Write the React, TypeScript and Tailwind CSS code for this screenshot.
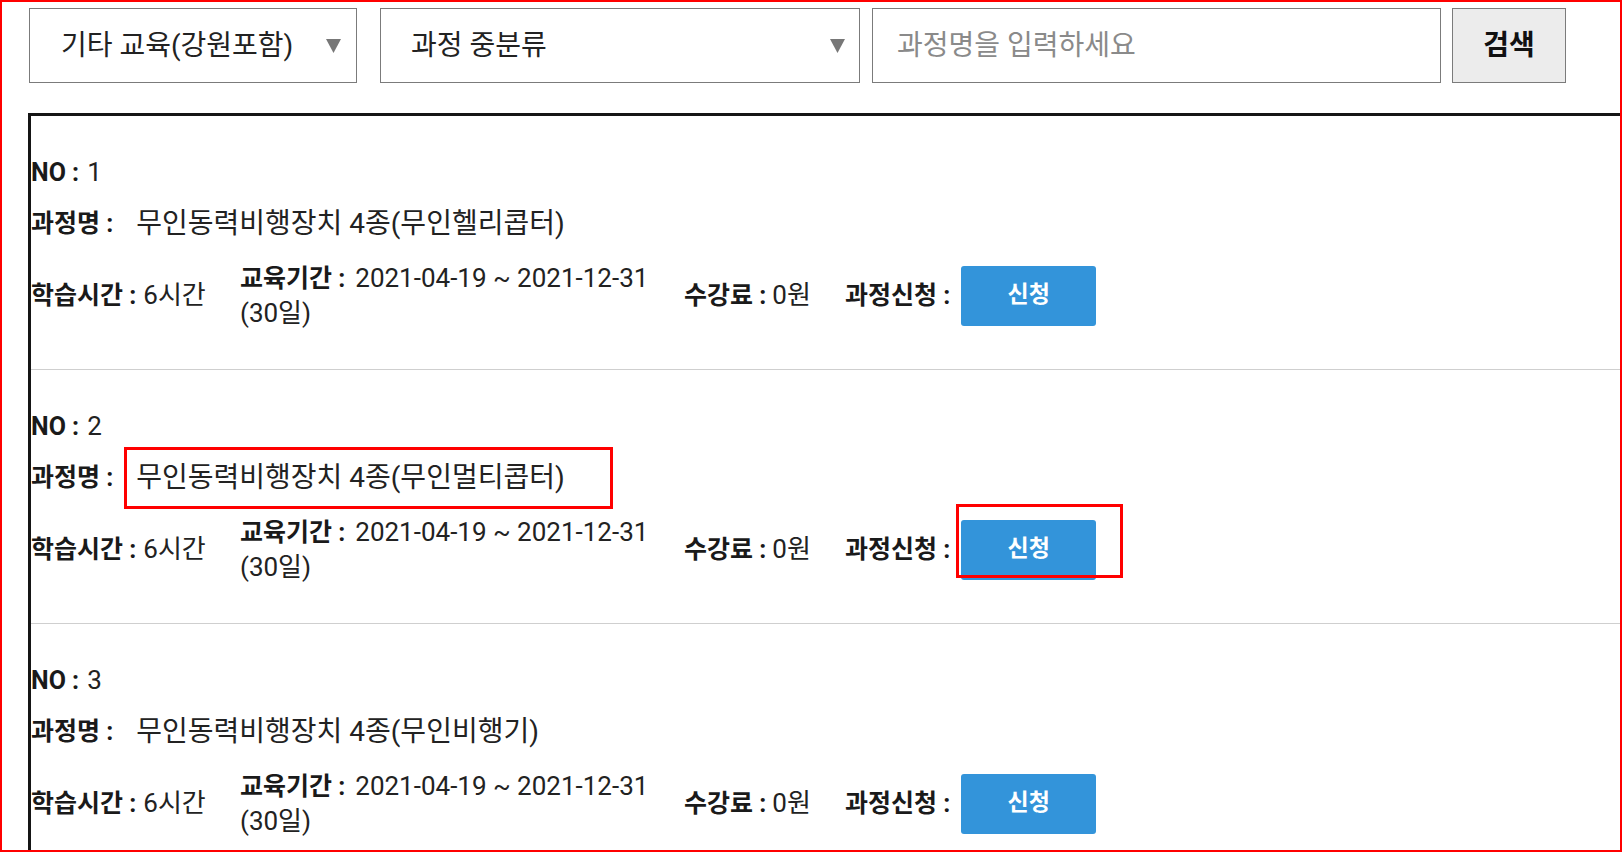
const rows = [
  { no: 1, name: '무인동력비행장치 4종(무인헬리콥터)', marked: false },
  { no: 2, name: '무인동력비행장치 4종(무인멀티콥터)', marked: true },
  { no: 3, name: '무인동력비행장치 4종(무인비행기)', marked: false },
];

function Caret() {
  return (
    <svg width="15" height="15" viewBox="0 0 15 15" className="shrink-0">
      <polygon points="0,1 15,1 7.5,15" fill="#777" />
    </svg>
  );
}

function Label({ children }: { children: React.ReactNode }) {
  return <span className="text-[25px] font-bold text-[#1a1a1a]">{children}</span>;
}

export default function App() {
  return (
    <div className="h-[852px] w-[1622px] overflow-hidden border-2 border-[#ff0000] bg-white pl-[26px] pt-[6px] font-['Roboto','Noto_Sans_CJK_KR',sans-serif] text-[#222]">
      <div className="flex h-[75px] items-stretch">
        <div className="ml-[1px] flex w-[328px] items-center justify-between border border-[#7b7b7b] pl-[31px] pr-[15px] text-[28px] text-[#222]">
          <span>기타 교육(강원포함)</span>
          <Caret />
        </div>
        <div className="ml-[23px] flex w-[480px] items-center justify-between border border-[#7b7b7b] pl-[30px] pr-[14px] text-[28px] text-[#222]">
          <span>과정 중분류</span>
          <Caret />
        </div>
        <div className="ml-[12px] flex w-[569px] items-center border border-[#7b7b7b] pl-[24px] text-[28px] text-[#8a8a8a]">
          과정명을 입력하세요
        </div>
        <div className="ml-[11px] flex w-[114px] items-center justify-center border border-[#7b7b7b] bg-[#ececec] text-[28px] font-bold text-[#111]">
          검색
        </div>
      </div>

      <div className="mt-[30px] border-l-[3px] border-t-[3px] border-[#151515]">
        {rows.map((r) => (
          <div key={r.no} className="relative border-b border-[#cfcfcf] pb-[39px] pt-[38px]">
            <div className="text-[26px] leading-[36px]">
              <Label>NO :</Label>
              <span className="ml-[8px]">{r.no}</span>
            </div>
            <div className="mt-[15px] flex items-center leading-[36px]">
              <Label>과정명 :</Label>
              <span className="ml-[23px] text-[28px]">{r.name}</span>
            </div>
            <div className="mt-[19px] flex items-center">
              <div className="w-[209px] text-[26px] leading-[36px]">
                <Label>학습시간 :</Label>
                <span className="ml-[7px]">6시간</span>
              </div>
              <div className="w-[444px] pr-[20px] text-[26px] leading-[34px]">
                <Label>교육기간 :</Label>
                <span className="ml-[10px]">2021-04-19 ~ 2021-12-31 (30일)</span>
              </div>
              <div className="w-[161px] text-[26px] leading-[36px]">
                <Label>수강료 :</Label>
                <span className="ml-[6px]">0원</span>
              </div>
              <div className="flex items-center">
                <Label>과정신청 :</Label>
                <div className="ml-[11px] flex h-[60px] w-[135px] items-center justify-center rounded-[3px] bg-[#3394da] text-[23px] font-bold text-white">
                  신청
                </div>
              </div>
            </div>
            {r.marked && (
              <>
                <div className="pointer-events-none absolute left-[93px] top-[77px] h-[62px] w-[489px] border-[3px] border-[#ff0000]" />
                <div className="pointer-events-none absolute left-[925px] top-[134px] h-[74px] w-[167px] border-[3px] border-[#ff0000]" />
              </>
            )}
          </div>
        ))}
      </div>
    </div>
  );
}
